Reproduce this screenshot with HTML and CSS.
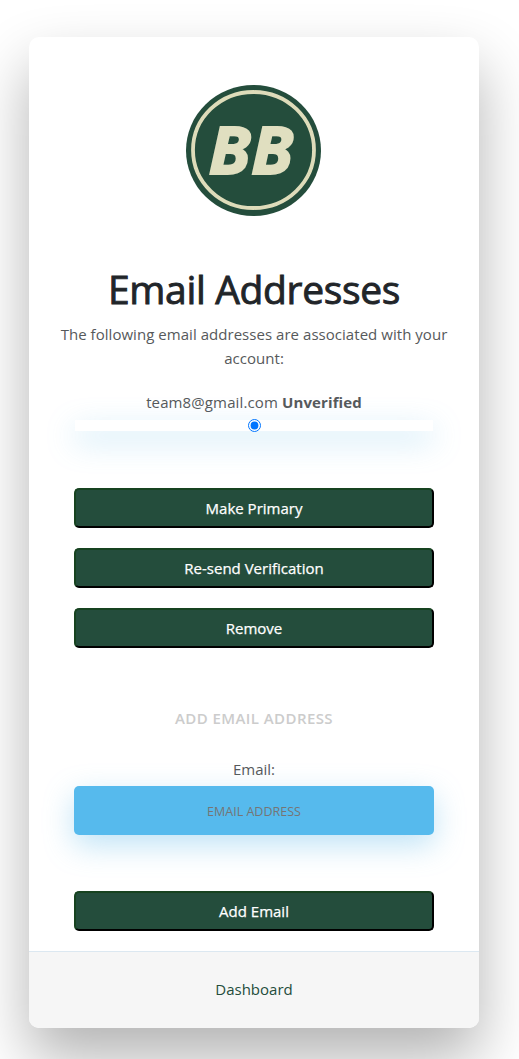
FILE: index.html
```
<!DOCTYPE html>
<html lang="en">
<head>
<meta charset="utf-8">
<title>Email Addresses</title>
<link rel="stylesheet" href="styles.css">
</head>
<body>
<main class="card">
  <svg class="logo" viewBox="0 0 135 131" role="img" aria-label="BB">
    <ellipse cx="67.5" cy="65.5" rx="67.5" ry="65.5" fill="#244d3c"/>
    <ellipse cx="67.5" cy="65" rx="60.5" ry="58" fill="none" stroke="#dedcba" stroke-width="3.8"/>
    <text class="logo-text" x="22.5" y="88.5" textLength="85" lengthAdjust="spacingAndGlyphs">BB</text>
  </svg>
  <h1 class="title">Email Addresses</h1>
  <p class="intro">The following email addresses are associated with your account:</p>
  <form class="form">
    <label class="address" for="primary"><span class="mail">team8@gmail.com</span> <strong class="status">Unverified</strong></label>
    <div class="radio-bar"><input class="radio" id="primary" type="radio" checked></div>
    <div class="actions">
      <button class="button primary" type="button">Make Primary</button>
      <button class="button resend" type="button">Re-send Verification</button>
      <button class="button remove" type="button">Remove</button>
    </div>
  </form>
  <h2 class="subtitle">ADD EMAIL ADDRESS</h2>
  <form class="form">
    <label class="label" for="email">Email:</label>
    <input class="field" id="email" type="email" placeholder="EMAIL ADDRESS">
    <button class="button add" type="button">Add Email</button>
  </form>
  <footer class="footer"><a class="link" href="#">Dashboard</a></footer>
</main>
</body>
</html>
```
FILE: styles.css
```
* { box-sizing: border-box; }
body {
  margin: 0;
  padding: 37px 40px 31px 29px;
  height: 1059px;
  overflow: hidden;
  background: #fff;
  color: #56595b;
  font: 15px/24px "Open Sans", "Noto Sans", sans-serif;
}
.card {
  display: flex;
  flex-direction: column;
  align-items: center;
  width: 450px;
  height: 991px;
  padding-top: 48px;
  border-radius: 10px;
  overflow: hidden;
  background: #fff;
  box-shadow: 0 30px 60px 0 rgba(0, 0, 0, .3);
  text-align: center;
}
.logo { display: block; width: 135px; height: 131px; flex: none; margin-right: 1px; }
.logo-text {
  font: italic 700 67px "Open Sans", sans-serif;
  fill: #e0dfc0;
  stroke: #e0dfc0;
  stroke-width: 1.8;
}
.title {
  margin: 49px 0 9px;
  color: #212529;
  font-size: 39px;
  font-weight: 500;
  line-height: 48px;
  letter-spacing: -.35px;
  white-space: nowrap;
  -webkit-text-stroke: .9px #212529;
}
.intro { width: 400px; margin: 0 0 20px; letter-spacing: .04px; }
.form { display: flex; flex-direction: column; align-items: center; width: 360px; }
.address { height: 30px; white-space: nowrap; letter-spacing: .12px; }
.radio-bar {
  display: flex;
  justify-content: center;
  align-items: center;
  width: 358px;
  height: 11px;
  background: #fff;
  box-shadow: 0 10px 30px 0 rgba(95, 186, 233, .4);
}
.radio { width: 13px; height: 13px; margin: 0; flex: none; }
.actions { display: grid; gap: 20px; margin-top: 57px; }
.button {
  width: 360px;
  height: 40px;
  padding: 0 0 1px;
  border: 2px solid;
  border-color: #174320 #000 #000 #174320;
  border-radius: 5px;
  background: #244d3c;
  color: #fff;
  font: 500 15px/24px "Open Sans", "Noto Sans", sans-serif;
  -webkit-text-stroke: .25px #fff;
}
.subtitle { margin: 58px 0 27px; color: #ccc; font-size: 15px; font-weight: 600; line-height: 24px; letter-spacing: .42px; }
.label { margin-bottom: 5px; }
.field {
  width: 360px;
  height: 49px;
  padding: 2px 0 0;
  border: 0;
  border-radius: 5px;
  background: #56baed;
  box-shadow: 0 10px 30px 0 rgba(95, 186, 233, .4);
  text-align: center;
  font: 12.5px "Open Sans", sans-serif;
}
.field::placeholder { color: #757575; opacity: 1; }
.add { margin-top: 56px; }
.footer {
  align-self: stretch;
  height: 77px;
  margin-top: 20px;
  padding-top: 25px;
  border-top: 1px solid #dce8f1;
  background: #f6f6f6;
}
.link { color: #244d3c; text-decoration: none; }
```
